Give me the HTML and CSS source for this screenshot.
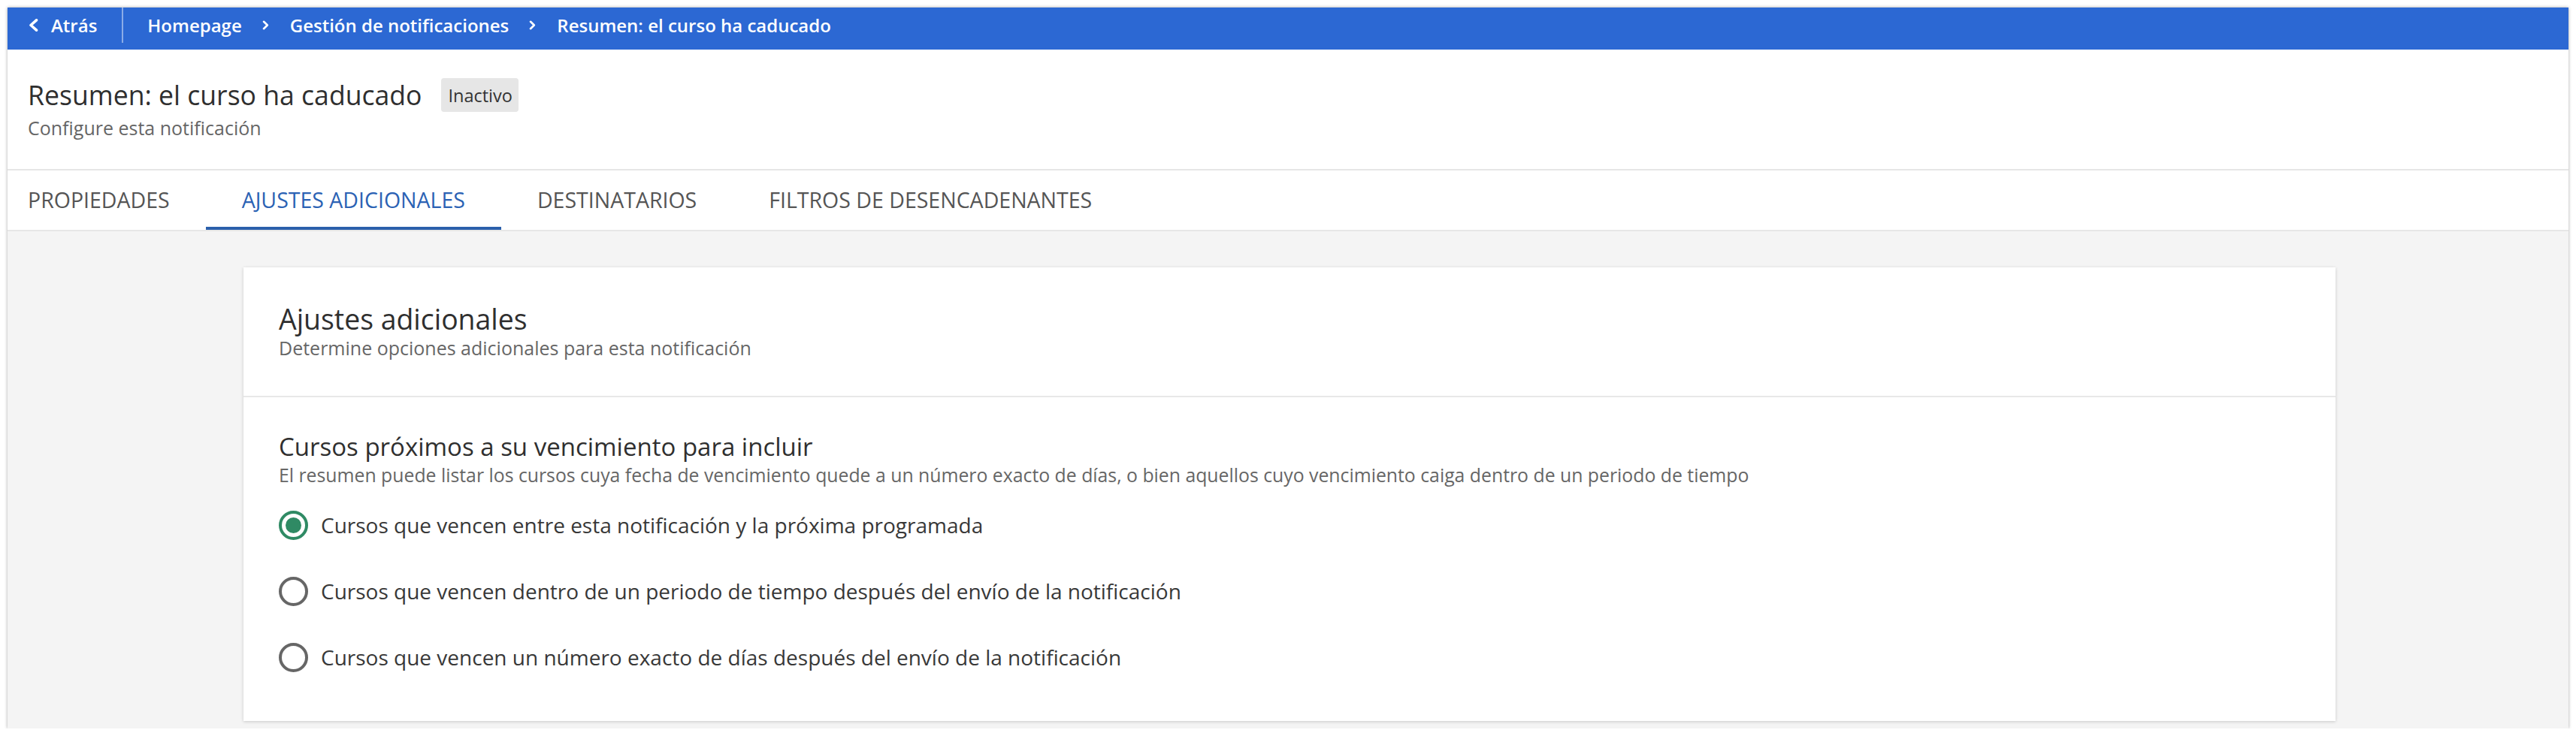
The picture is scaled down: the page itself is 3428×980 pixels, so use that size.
FILE: index.html
```html
<!DOCTYPE html>
<html lang="es">
<head>
<meta charset="utf-8">
<title>Resumen: el curso ha caducado</title>
<link rel="stylesheet" href="styles.css">
</head>
<body>
<div class="window">
  <div class="topbar">
    <div class="back">
      <svg class="back-icon" width="15" height="17" viewBox="0 0 15 17" aria-hidden="true"><path d="M11.5 1.8 L4 8.5 L11.5 15.2" fill="none" stroke="#fff" stroke-width="3.6" stroke-linecap="round" stroke-linejoin="round"/></svg>
      <span>Atrás</span>
    </div>
    <div class="crumbs">
      <span>Homepage</span>
      <svg class="crumb-sep" width="9" height="13" viewBox="0 0 9 13" aria-hidden="true"><path d="M2 1.8 L6.8 6.5 L2 11.2" fill="none" stroke="#fff" stroke-width="2.6" stroke-linecap="round" stroke-linejoin="round"/></svg>
      <span>Gestión de notificaciones</span>
      <svg class="crumb-sep" width="9" height="13" viewBox="0 0 9 13" aria-hidden="true"><path d="M2 1.8 L6.8 6.5 L2 11.2" fill="none" stroke="#fff" stroke-width="2.6" stroke-linecap="round" stroke-linejoin="round"/></svg>
      <span>Resumen: el curso ha caducado</span>
    </div>
  </div>

  <div class="header">
    <div class="title-row">
      <h1 class="page-title">Resumen: el curso ha caducado</h1>
      <span class="badge">Inactivo</span>
    </div>
    <div class="page-sub">Configure esta notificación</div>
  </div>

  <div class="tabs">
    <div class="tab">PROPIEDADES</div>
    <div class="tab active">AJUSTES ADICIONALES</div>
    <div class="tab">DESTINATARIOS</div>
    <div class="tab">FILTROS DE DESENCADENANTES</div>
  </div>

  <div class="content">
    <div class="card">
      <div class="card-head">
        <h2 class="card-title">Ajustes adicionales</h2>
        <p class="card-desc">Determine opciones adicionales para esta notificación</p>
      </div>
      <div class="section">
        <h3 class="section-title">Cursos próximos a su vencimiento para incluir</h3>
        <p class="section-desc">El resumen puede listar los cursos cuya fecha de vencimiento quede a un número exacto de días, o bien aquellos cuyo vencimiento caiga dentro de un periodo de tiempo</p>
        <div class="options">
          <div class="option"><span class="radio checked"></span><span>Cursos que vencen entre esta notificación y la próxima programada</span></div>
          <div class="option"><span class="radio"></span><span>Cursos que vencen dentro de un periodo de tiempo después del envío de la notificación</span></div>
          <div class="option"><span class="radio"></span><span>Cursos que vencen un número exacto de días después del envío de la notificación</span></div>
        </div>
      </div>
    </div>
  </div>
</div>
</body>
</html>
```
FILE: styles.css
```css
* { box-sizing: border-box; }

body {
  margin: 0;
  background: #ffffff;
  font-family: "Open Sans", "Noto Sans", sans-serif;
}

.window {
  margin: 10px 0 0 10px;
  width: 3408px;
  height: 960px;
  overflow: hidden;
  display: flex;
  flex-direction: column;
  background: #ffffff;
  box-shadow: 0 0 4px rgba(0, 0, 0, 0.35);
}

/* top bar */
.topbar {
  flex: 0 0 56px;
  height: 56px;
  padding-bottom: 9px;
  background: #2c68d3;
  color: #ffffff;
  display: flex;
  align-items: stretch;
  font-size: 24px;
  font-weight: 600;
}

.back {
  display: flex;
  align-items: center;
  gap: 16px;
  padding: 0 33px 0 27px;
  border-right: 2px solid rgba(255, 255, 255, 0.45);
}

.crumbs {
  display: flex;
  align-items: center;
  padding-left: 32px;
  white-space: nowrap;
}

.crumb-sep {
  margin: 0 28px 0 27px;
}

/* header */
.header {
  padding: 37px 37px 38px 27px;
  border-bottom: 2px solid #e6e6e6;
}

.title-row {
  display: flex;
  align-items: center;
}

.page-title {
  margin: 0;
  font-size: 35.6px;
  line-height: 47.7px;
  font-weight: 400;
  color: #2f2f2f;
}

.badge {
  margin-left: 26px;
  height: 45px;
  padding: 0 8px 0 9px;
  display: flex;
  align-items: center;
  background: #e6e6e6;
  border-radius: 4px;
  font-size: 23.5px;
  color: #333333;
}

.page-sub {
  margin-top: 2px;
  font-size: 25px;
  line-height: 34px;
  color: #666666;
}

/* tabs */
.tabs {
  display: flex;
  padding-left: 27px;
  border-bottom: 2px solid #e6e6e6;
}

.tab {
  height: 79px;
  padding: 20px 48px 0;
  font-size: 28.5px;
  line-height: 38.8px;
  color: #555555;
  border-bottom: 4px solid transparent;
  white-space: nowrap;
}

.tab:first-child {
  padding-left: 0;
}

.tab.active {
  color: #2b62b4;
  border-bottom-color: #2b5fab;
}

/* content */
.content {
  flex: 1;
  display: flex;
  flex-direction: column;
  background: #f4f4f4;
  padding: 48px 310px 10px 314px;
}

.card {
  flex: 1;
  background: #ffffff;
  box-shadow: 0 1px 4px rgba(0, 0, 0, 0.18);
}

.card-head {
  padding: 47.5px 47px 49.7px;
  border-bottom: 2px solid #e8e8e8;
}

.card-title {
  margin: 0;
  font-size: 37.4px;
  line-height: 44.4px;
  font-weight: 400;
  color: #2f2f2f;
}

.card-desc {
  margin: 0;
  font-size: 25px;
  line-height: 30px;
  color: #666666;
}

.section {
  padding: 45.4px 47px 47px;
}

.section-title {
  margin: 0;
  font-size: 33px;
  line-height: 39.6px;
  font-weight: 400;
  color: #2f2f2f;
}

.section-desc {
  margin: 2.3px 0 0;
  font-size: 24.8px;
  line-height: 30px;
  color: #666666;
}

.options {
  margin-top: 33.7px;
  display: flex;
  flex-direction: column;
  gap: 50px;
}

.option {
  display: flex;
  align-items: center;
  gap: 17px;
  height: 38px;
  font-size: 28px;
  color: #383838;
  white-space: nowrap;
}

.radio {
  flex: 0 0 39px;
  width: 39px;
  height: 39px;
  border: 4px solid #666666;
  border-radius: 50%;
  display: flex;
  align-items: center;
  justify-content: center;
}

.radio.checked {
  border-color: #2f8a64;
}

.radio.checked::after {
  content: "";
  width: 21px;
  height: 21px;
  border-radius: 50%;
  background: #2f8a64;
}
```
